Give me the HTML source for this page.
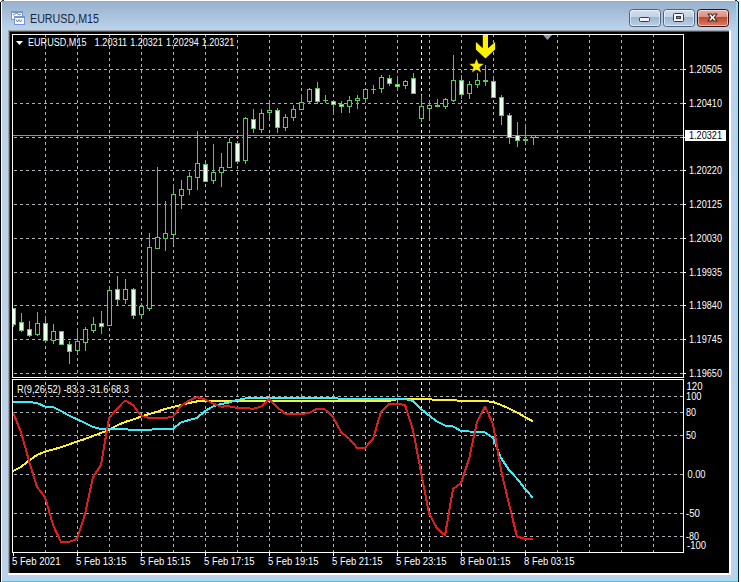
<!DOCTYPE html>
<html><head><meta charset="utf-8"><title>EURUSD,M15</title>
<style>
html,body{margin:0;padding:0;width:741px;height:582px;overflow:hidden;background:#fff;}
svg{display:block;font-family:"Liberation Sans", sans-serif;}
</style></head><body>
<svg width="741" height="582" viewBox="0 0 741 582">
<defs><linearGradient id="tg" x1="0" y1="0" x2="0" y2="1"><stop offset="0" stop-color="#97b0cc"/><stop offset="1" stop-color="#bbd2ea"/></linearGradient><linearGradient id="bg1" x1="0" y1="0" x2="0" y2="1"><stop offset="0" stop-color="#d2dfee"/><stop offset="0.45" stop-color="#c2d3e7"/><stop offset="0.46" stop-color="#9fb6d0"/><stop offset="1" stop-color="#bcd0e6"/></linearGradient><linearGradient id="bg2" x1="0" y1="0" x2="0" y2="1"><stop offset="0" stop-color="#eab0a0"/><stop offset="0.45" stop-color="#d99080"/><stop offset="0.46" stop-color="#c04828"/><stop offset="1" stop-color="#dc8070"/></linearGradient></defs>
<rect x="0" y="0" width="741" height="582" fill="#ffffff" />
<rect x="0" y="1" width="739" height="581" fill="#bcd2ea" />
<rect x="0" y="1" width="739" height="28" fill="url(#tg)" />
<rect x="0" y="1" width="739" height="1" fill="#98aec4" />
<rect x="0" y="2" width="1" height="580" fill="#000000" />
<rect x="1" y="1" width="1" height="1" fill="#303840" />
<rect x="2" y="0" width="2" height="1" fill="#303840" />
<rect x="0" y="0" width="1" height="2" fill="#ffffff" />
<rect x="735" y="0" width="2" height="1" fill="#303840" />
<rect x="737" y="1" width="1" height="2" fill="#303840" />
<rect x="739" y="0" width="2" height="582" fill="#ffffff" />
<rect x="1" y="2" width="1" height="580" fill="#ffffff" />
<rect x="736" y="2" width="2" height="580" fill="#9adcf6" />
<rect x="738" y="2" width="1" height="580" fill="#0a1520" />
<rect x="2" y="580" width="736" height="1" fill="#99e0f8" />
<rect x="2" y="581" width="736" height="1" fill="#5ab8d8" />
<rect x="8" y="30" width="723" height="1" fill="#a0a4a8" />
<rect x="8" y="30" width="1" height="545" fill="#a0a4a8" />
<rect x="9" y="31" width="721" height="1" fill="#505050" />
<rect x="9" y="31" width="1" height="543" fill="#505050" />
<rect x="729" y="30" width="2" height="545" fill="#ffffff" />
<rect x="8" y="573" width="723" height="2" fill="#ffffff" />
<rect x="10" y="32" width="719" height="541" fill="#000000" />
<g shape-rendering="crispEdges">
<rect x="11" y="11" width="12" height="9" fill="#7598cc" />
<rect x="12" y="13" width="10" height="6" fill="#f8fbff" />
<rect x="14" y="16" width="11" height="9" fill="#7598cc" />
<rect x="15" y="18" width="9" height="6" fill="#f8fbff" />
</g>
<polyline points="13,15 15,14 17,13 19,15 21,14" fill="none" stroke="#4a6aa0" stroke-width="0.8"/>
<polyline points="16,19.5 17.5,22 19,19.5 20.5,22 22,19.5" fill="none" stroke="#4a6aa0" stroke-width="0.8"/>
<text x="30" y="23" font-family="Liberation Sans" font-size="12.5" fill="#15263f" textLength="69" lengthAdjust="spacingAndGlyphs">EURUSD,M15</text>
<rect x="629.5" y="9.5" width="31" height="17" rx="3" ry="3" fill="url(#bg1)" stroke="#4f627a" stroke-width="1"/>
<rect x="630.5" y="10.5" width="29" height="15" rx="2" ry="2" fill="none" stroke="rgba(255,255,255,0.55)" stroke-width="1"/>
<rect x="663.5" y="9.5" width="31" height="17" rx="3" ry="3" fill="url(#bg1)" stroke="#4f627a" stroke-width="1"/>
<rect x="664.5" y="10.5" width="29" height="15" rx="2" ry="2" fill="none" stroke="rgba(255,255,255,0.55)" stroke-width="1"/>
<rect x="697.5" y="9.5" width="31" height="17" rx="3" ry="3" fill="url(#bg2)" stroke="#3a1010" stroke-width="1"/>
<rect x="698.5" y="10.5" width="29" height="15" rx="2" ry="2" fill="none" stroke="rgba(255,255,255,0.55)" stroke-width="1"/>
<rect x="639.5" y="17.5" width="10" height="4" rx="1" fill="#f4f4f8" stroke="#333c48" stroke-width="1"/>
<rect x="673.5" y="13.5" width="10" height="8" rx="1" fill="#f4f4f8" stroke="#333c48" stroke-width="1"/>
<rect x="676.5" y="16.5" width="4" height="2" fill="#8090a0" stroke="#333c48" stroke-width="1"/>
<path d="M708.5,13.5 L712.5,16 L716.5,13.5 M708.5,21.5 L712.5,19 L716.5,21.5" fill="none"/>
<polygon points="708,14 711.3,14 712.5,15.7 713.7,14 717,14 714.4,17.5 717,21 713.7,21 712.5,19.3 711.3,21 708,21 710.6,17.5" fill="#ffffff" stroke="#3a2424" stroke-width="1.1" stroke-linejoin="round"/>
<g shape-rendering="crispEdges">
<rect x="12" y="34" width="672" height="1" fill="#ffffff" />
<rect x="12" y="34" width="1" height="344" fill="#ffffff" />
<rect x="683" y="34" width="1" height="344" fill="#ffffff" />
<rect x="12" y="377" width="672" height="1" fill="#ffffff" />
<rect x="12" y="379" width="672" height="1" fill="#ffffff" />
<rect x="12" y="379" width="1" height="174" fill="#ffffff" />
<rect x="683" y="379" width="1" height="174" fill="#ffffff" />
<rect x="12" y="552" width="672" height="1" fill="#ffffff" />
<svg x="45" y="35" width="1" height="342" overflow="hidden"><path d="M0.5,-1V342" stroke="#aab0b6" stroke-width="1" stroke-dasharray="3 3"/></svg>
<svg x="45" y="380" width="1" height="172" overflow="hidden"><path d="M0.5,-4V172" stroke="#aab0b6" stroke-width="1" stroke-dasharray="3 3"/></svg>
<svg x="77" y="35" width="1" height="342" overflow="hidden"><path d="M0.5,-1V342" stroke="#aab0b6" stroke-width="1" stroke-dasharray="3 3"/></svg>
<svg x="77" y="380" width="1" height="172" overflow="hidden"><path d="M0.5,-4V172" stroke="#aab0b6" stroke-width="1" stroke-dasharray="3 3"/></svg>
<svg x="109" y="35" width="1" height="342" overflow="hidden"><path d="M0.5,-1V342" stroke="#aab0b6" stroke-width="1" stroke-dasharray="3 3"/></svg>
<svg x="109" y="380" width="1" height="172" overflow="hidden"><path d="M0.5,-4V172" stroke="#aab0b6" stroke-width="1" stroke-dasharray="3 3"/></svg>
<svg x="141" y="35" width="1" height="342" overflow="hidden"><path d="M0.5,-1V342" stroke="#aab0b6" stroke-width="1" stroke-dasharray="3 3"/></svg>
<svg x="141" y="380" width="1" height="172" overflow="hidden"><path d="M0.5,-4V172" stroke="#aab0b6" stroke-width="1" stroke-dasharray="3 3"/></svg>
<svg x="173" y="35" width="1" height="342" overflow="hidden"><path d="M0.5,-1V342" stroke="#aab0b6" stroke-width="1" stroke-dasharray="3 3"/></svg>
<svg x="173" y="380" width="1" height="172" overflow="hidden"><path d="M0.5,-4V172" stroke="#aab0b6" stroke-width="1" stroke-dasharray="3 3"/></svg>
<svg x="205" y="35" width="1" height="342" overflow="hidden"><path d="M0.5,-1V342" stroke="#aab0b6" stroke-width="1" stroke-dasharray="3 3"/></svg>
<svg x="205" y="380" width="1" height="172" overflow="hidden"><path d="M0.5,-4V172" stroke="#aab0b6" stroke-width="1" stroke-dasharray="3 3"/></svg>
<svg x="237" y="35" width="1" height="342" overflow="hidden"><path d="M0.5,-1V342" stroke="#aab0b6" stroke-width="1" stroke-dasharray="3 3"/></svg>
<svg x="237" y="380" width="1" height="172" overflow="hidden"><path d="M0.5,-4V172" stroke="#aab0b6" stroke-width="1" stroke-dasharray="3 3"/></svg>
<svg x="269" y="35" width="1" height="342" overflow="hidden"><path d="M0.5,-1V342" stroke="#aab0b6" stroke-width="1" stroke-dasharray="3 3"/></svg>
<svg x="269" y="380" width="1" height="172" overflow="hidden"><path d="M0.5,-4V172" stroke="#aab0b6" stroke-width="1" stroke-dasharray="3 3"/></svg>
<svg x="301" y="35" width="1" height="342" overflow="hidden"><path d="M0.5,-1V342" stroke="#aab0b6" stroke-width="1" stroke-dasharray="3 3"/></svg>
<svg x="301" y="380" width="1" height="172" overflow="hidden"><path d="M0.5,-4V172" stroke="#aab0b6" stroke-width="1" stroke-dasharray="3 3"/></svg>
<svg x="333" y="35" width="1" height="342" overflow="hidden"><path d="M0.5,-1V342" stroke="#aab0b6" stroke-width="1" stroke-dasharray="3 3"/></svg>
<svg x="333" y="380" width="1" height="172" overflow="hidden"><path d="M0.5,-4V172" stroke="#aab0b6" stroke-width="1" stroke-dasharray="3 3"/></svg>
<svg x="365" y="35" width="1" height="342" overflow="hidden"><path d="M0.5,-1V342" stroke="#aab0b6" stroke-width="1" stroke-dasharray="3 3"/></svg>
<svg x="365" y="380" width="1" height="172" overflow="hidden"><path d="M0.5,-4V172" stroke="#aab0b6" stroke-width="1" stroke-dasharray="3 3"/></svg>
<svg x="397" y="35" width="1" height="342" overflow="hidden"><path d="M0.5,-1V342" stroke="#aab0b6" stroke-width="1" stroke-dasharray="3 3"/></svg>
<svg x="397" y="380" width="1" height="172" overflow="hidden"><path d="M0.5,-4V172" stroke="#aab0b6" stroke-width="1" stroke-dasharray="3 3"/></svg>
<svg x="429" y="35" width="1" height="342" overflow="hidden"><path d="M0.5,-1V342" stroke="#aab0b6" stroke-width="1" stroke-dasharray="3 3"/></svg>
<svg x="429" y="380" width="1" height="172" overflow="hidden"><path d="M0.5,-4V172" stroke="#aab0b6" stroke-width="1" stroke-dasharray="3 3"/></svg>
<svg x="461" y="35" width="1" height="342" overflow="hidden"><path d="M0.5,-1V342" stroke="#aab0b6" stroke-width="1" stroke-dasharray="3 3"/></svg>
<svg x="461" y="380" width="1" height="172" overflow="hidden"><path d="M0.5,-4V172" stroke="#aab0b6" stroke-width="1" stroke-dasharray="3 3"/></svg>
<svg x="493" y="35" width="1" height="342" overflow="hidden"><path d="M0.5,-1V342" stroke="#aab0b6" stroke-width="1" stroke-dasharray="3 3"/></svg>
<svg x="493" y="380" width="1" height="172" overflow="hidden"><path d="M0.5,-4V172" stroke="#aab0b6" stroke-width="1" stroke-dasharray="3 3"/></svg>
<svg x="525" y="35" width="1" height="342" overflow="hidden"><path d="M0.5,-1V342" stroke="#aab0b6" stroke-width="1" stroke-dasharray="3 3"/></svg>
<svg x="525" y="380" width="1" height="172" overflow="hidden"><path d="M0.5,-4V172" stroke="#aab0b6" stroke-width="1" stroke-dasharray="3 3"/></svg>
<svg x="557" y="35" width="1" height="342" overflow="hidden"><path d="M0.5,-1V342" stroke="#aab0b6" stroke-width="1" stroke-dasharray="3 3"/></svg>
<svg x="557" y="380" width="1" height="172" overflow="hidden"><path d="M0.5,-4V172" stroke="#aab0b6" stroke-width="1" stroke-dasharray="3 3"/></svg>
<svg x="589" y="35" width="1" height="342" overflow="hidden"><path d="M0.5,-1V342" stroke="#aab0b6" stroke-width="1" stroke-dasharray="3 3"/></svg>
<svg x="589" y="380" width="1" height="172" overflow="hidden"><path d="M0.5,-4V172" stroke="#aab0b6" stroke-width="1" stroke-dasharray="3 3"/></svg>
<svg x="621" y="35" width="1" height="342" overflow="hidden"><path d="M0.5,-1V342" stroke="#aab0b6" stroke-width="1" stroke-dasharray="3 3"/></svg>
<svg x="621" y="380" width="1" height="172" overflow="hidden"><path d="M0.5,-4V172" stroke="#aab0b6" stroke-width="1" stroke-dasharray="3 3"/></svg>
<svg x="653" y="35" width="1" height="342" overflow="hidden"><path d="M0.5,-1V342" stroke="#aab0b6" stroke-width="1" stroke-dasharray="3 3"/></svg>
<svg x="653" y="380" width="1" height="172" overflow="hidden"><path d="M0.5,-4V172" stroke="#aab0b6" stroke-width="1" stroke-dasharray="3 3"/></svg>
<svg x="13" y="69" width="670" height="1" overflow="hidden"><path d="M-5,0.5H670" stroke="#aab0b6" stroke-width="1" stroke-dasharray="3 3"/></svg>
<svg x="13" y="103" width="670" height="1" overflow="hidden"><path d="M-5,0.5H670" stroke="#aab0b6" stroke-width="1" stroke-dasharray="3 3"/></svg>
<svg x="13" y="137" width="670" height="1" overflow="hidden"><path d="M-5,0.5H670" stroke="#aab0b6" stroke-width="1" stroke-dasharray="3 3"/></svg>
<svg x="13" y="170" width="670" height="1" overflow="hidden"><path d="M-5,0.5H670" stroke="#aab0b6" stroke-width="1" stroke-dasharray="3 3"/></svg>
<svg x="13" y="204" width="670" height="1" overflow="hidden"><path d="M-5,0.5H670" stroke="#aab0b6" stroke-width="1" stroke-dasharray="3 3"/></svg>
<svg x="13" y="238" width="670" height="1" overflow="hidden"><path d="M-5,0.5H670" stroke="#aab0b6" stroke-width="1" stroke-dasharray="3 3"/></svg>
<svg x="13" y="272" width="670" height="1" overflow="hidden"><path d="M-5,0.5H670" stroke="#aab0b6" stroke-width="1" stroke-dasharray="3 3"/></svg>
<svg x="13" y="305" width="670" height="1" overflow="hidden"><path d="M-5,0.5H670" stroke="#aab0b6" stroke-width="1" stroke-dasharray="3 3"/></svg>
<svg x="13" y="339" width="670" height="1" overflow="hidden"><path d="M-5,0.5H670" stroke="#aab0b6" stroke-width="1" stroke-dasharray="3 3"/></svg>
<svg x="13" y="373" width="670" height="1" overflow="hidden"><path d="M-5,0.5H670" stroke="#aab0b6" stroke-width="1" stroke-dasharray="3 3"/></svg>
<svg x="13" y="396" width="670" height="1" overflow="hidden"><path d="M-5,0.5H670" stroke="#aab0b6" stroke-width="1" stroke-dasharray="3 3"/></svg>
<svg x="13" y="412" width="670" height="1" overflow="hidden"><path d="M-5,0.5H670" stroke="#aab0b6" stroke-width="1" stroke-dasharray="3 3"/></svg>
<svg x="13" y="435" width="670" height="1" overflow="hidden"><path d="M-5,0.5H670" stroke="#aab0b6" stroke-width="1" stroke-dasharray="3 3"/></svg>
<svg x="13" y="474" width="670" height="1" overflow="hidden"><path d="M-5,0.5H670" stroke="#aab0b6" stroke-width="1" stroke-dasharray="3 3"/></svg>
<svg x="13" y="513" width="670" height="1" overflow="hidden"><path d="M-5,0.5H670" stroke="#aab0b6" stroke-width="1" stroke-dasharray="3 3"/></svg>
<svg x="13" y="536" width="670" height="1" overflow="hidden"><path d="M-5,0.5H670" stroke="#aab0b6" stroke-width="1" stroke-dasharray="3 3"/></svg>
<svg x="421" y="35" width="1" height="342" overflow="hidden"><path d="M0.5,-1V342" stroke="#ffffff" stroke-width="1" stroke-dasharray="3 3"/></svg>
<svg x="421" y="380" width="1" height="172" overflow="hidden"><path d="M0.5,-4V172" stroke="#ffffff" stroke-width="1" stroke-dasharray="3 3"/></svg>
<rect x="684" y="69" width="2" height="1" fill="#ffffff" />
<rect x="684" y="103" width="2" height="1" fill="#ffffff" />
<rect x="684" y="137" width="2" height="1" fill="#ffffff" />
<rect x="684" y="170" width="2" height="1" fill="#ffffff" />
<rect x="684" y="204" width="2" height="1" fill="#ffffff" />
<rect x="684" y="238" width="2" height="1" fill="#ffffff" />
<rect x="684" y="272" width="2" height="1" fill="#ffffff" />
<rect x="684" y="305" width="2" height="1" fill="#ffffff" />
<rect x="684" y="339" width="2" height="1" fill="#ffffff" />
<rect x="684" y="373" width="2" height="1" fill="#ffffff" />
<rect x="13" y="553" width="1" height="3" fill="#ffffff" />
<rect x="77" y="553" width="1" height="3" fill="#ffffff" />
<rect x="141" y="553" width="1" height="3" fill="#ffffff" />
<rect x="205" y="553" width="1" height="3" fill="#ffffff" />
<rect x="269" y="553" width="1" height="3" fill="#ffffff" />
<rect x="333" y="553" width="1" height="3" fill="#ffffff" />
<rect x="397" y="553" width="1" height="3" fill="#ffffff" />
<rect x="461" y="553" width="1" height="3" fill="#ffffff" />
<rect x="525" y="553" width="1" height="3" fill="#ffffff" />
<rect x="13" y="135" width="670" height="1" fill="#8796a6" />
</g>
<polygon points="543,35 552,35 547.5,40" fill="#8a9aaa"/>
<svg x="13" y="35" width="670" height="342" overflow="hidden"><g transform="translate(-13,-35)" shape-rendering="crispEdges">
<rect x="13" y="308" width="1" height="19" fill="#56cc56" />
<rect x="11" y="308" width="5" height="17" fill="#56cc56" />
<rect x="12" y="309" width="3" height="15" fill="#eaffea" />
<rect x="21" y="313" width="1" height="19" fill="#56cc56" />
<rect x="19" y="322" width="5" height="9" fill="#56cc56" />
<rect x="20" y="323" width="3" height="7" fill="#eaffea" />
<rect x="29" y="321" width="1" height="16" fill="#56cc56" />
<rect x="27" y="329" width="5" height="7" fill="#56cc56" />
<rect x="28" y="330" width="3" height="5" fill="#eaffea" />
<rect x="37" y="312" width="1" height="24" fill="#56cc56" />
<rect x="35" y="323" width="5" height="1" fill="#56cc56" />
<rect x="35" y="334" width="5" height="1" fill="#56cc56" />
<rect x="35" y="323" width="1" height="12" fill="#56cc56" />
<rect x="39" y="323" width="1" height="12" fill="#56cc56" />
<rect x="36" y="324" width="3" height="10" fill="#000000" />
<rect x="45" y="316" width="1" height="27" fill="#56cc56" />
<rect x="43" y="323" width="5" height="18" fill="#56cc56" />
<rect x="44" y="324" width="3" height="16" fill="#eaffea" />
<rect x="53" y="324" width="1" height="20" fill="#56cc56" />
<rect x="51" y="331" width="5" height="1" fill="#56cc56" />
<rect x="51" y="340" width="5" height="1" fill="#56cc56" />
<rect x="51" y="331" width="1" height="10" fill="#56cc56" />
<rect x="55" y="331" width="1" height="10" fill="#56cc56" />
<rect x="52" y="332" width="3" height="8" fill="#000000" />
<rect x="61" y="331" width="1" height="14" fill="#56cc56" />
<rect x="59" y="331" width="5" height="14" fill="#56cc56" />
<rect x="60" y="332" width="3" height="12" fill="#eaffea" />
<rect x="69" y="341" width="1" height="23" fill="#56cc56" />
<rect x="67" y="344" width="5" height="8" fill="#56cc56" />
<rect x="68" y="345" width="3" height="6" fill="#eaffea" />
<rect x="77" y="328" width="1" height="25" fill="#56cc56" />
<rect x="75" y="341" width="5" height="1" fill="#56cc56" />
<rect x="75" y="350" width="5" height="1" fill="#56cc56" />
<rect x="75" y="341" width="1" height="10" fill="#56cc56" />
<rect x="79" y="341" width="1" height="10" fill="#56cc56" />
<rect x="76" y="342" width="3" height="8" fill="#000000" />
<rect x="85" y="327" width="1" height="24" fill="#56cc56" />
<rect x="83" y="329" width="5" height="1" fill="#56cc56" />
<rect x="83" y="342" width="5" height="1" fill="#56cc56" />
<rect x="83" y="329" width="1" height="14" fill="#56cc56" />
<rect x="87" y="329" width="1" height="14" fill="#56cc56" />
<rect x="84" y="330" width="3" height="12" fill="#000000" />
<rect x="93" y="317" width="1" height="16" fill="#56cc56" />
<rect x="91" y="324" width="5" height="1" fill="#56cc56" />
<rect x="91" y="330" width="5" height="1" fill="#56cc56" />
<rect x="91" y="324" width="1" height="7" fill="#56cc56" />
<rect x="95" y="324" width="1" height="7" fill="#56cc56" />
<rect x="92" y="325" width="3" height="5" fill="#000000" />
<rect x="101" y="311" width="1" height="23" fill="#56cc56" />
<rect x="99" y="323" width="5" height="4" fill="#56cc56" />
<rect x="100" y="324" width="3" height="2" fill="#eaffea" />
<rect x="109" y="287" width="1" height="39" fill="#56cc56" />
<rect x="107" y="290" width="5" height="1" fill="#56cc56" />
<rect x="107" y="325" width="5" height="1" fill="#56cc56" />
<rect x="107" y="290" width="1" height="36" fill="#56cc56" />
<rect x="111" y="290" width="1" height="36" fill="#56cc56" />
<rect x="108" y="291" width="3" height="34" fill="#000000" />
<rect x="117" y="276" width="1" height="29" fill="#56cc56" />
<rect x="115" y="289" width="5" height="11" fill="#56cc56" />
<rect x="116" y="290" width="3" height="9" fill="#eaffea" />
<rect x="125" y="279" width="1" height="25" fill="#56cc56" />
<rect x="123" y="289" width="5" height="1" fill="#56cc56" />
<rect x="123" y="299" width="5" height="1" fill="#56cc56" />
<rect x="123" y="289" width="1" height="11" fill="#56cc56" />
<rect x="127" y="289" width="1" height="11" fill="#56cc56" />
<rect x="124" y="290" width="3" height="9" fill="#000000" />
<rect x="133" y="288" width="1" height="31" fill="#56cc56" />
<rect x="131" y="289" width="5" height="27" fill="#56cc56" />
<rect x="132" y="290" width="3" height="25" fill="#eaffea" />
<rect x="141" y="303" width="1" height="16" fill="#56cc56" />
<rect x="139" y="306" width="5" height="1" fill="#56cc56" />
<rect x="139" y="314" width="5" height="1" fill="#56cc56" />
<rect x="139" y="306" width="1" height="9" fill="#56cc56" />
<rect x="143" y="306" width="1" height="9" fill="#56cc56" />
<rect x="140" y="307" width="3" height="7" fill="#000000" />
<rect x="149" y="233" width="1" height="78" fill="#56cc56" />
<rect x="147" y="247" width="5" height="1" fill="#56cc56" />
<rect x="147" y="308" width="5" height="1" fill="#56cc56" />
<rect x="147" y="247" width="1" height="62" fill="#56cc56" />
<rect x="151" y="247" width="1" height="62" fill="#56cc56" />
<rect x="148" y="248" width="3" height="60" fill="#000000" />
<rect x="157" y="167" width="1" height="82" fill="#56cc56" />
<rect x="155" y="237" width="5" height="1" fill="#56cc56" />
<rect x="155" y="248" width="5" height="1" fill="#56cc56" />
<rect x="155" y="237" width="1" height="12" fill="#56cc56" />
<rect x="159" y="237" width="1" height="12" fill="#56cc56" />
<rect x="156" y="238" width="3" height="10" fill="#000000" />
<rect x="165" y="201" width="1" height="50" fill="#56cc56" />
<rect x="163" y="233" width="5" height="1" fill="#56cc56" />
<rect x="163" y="238" width="5" height="1" fill="#56cc56" />
<rect x="163" y="233" width="1" height="6" fill="#56cc56" />
<rect x="167" y="233" width="1" height="6" fill="#56cc56" />
<rect x="164" y="234" width="3" height="4" fill="#000000" />
<rect x="173" y="184" width="1" height="61" fill="#56cc56" />
<rect x="171" y="194" width="5" height="1" fill="#56cc56" />
<rect x="171" y="234" width="5" height="1" fill="#56cc56" />
<rect x="171" y="194" width="1" height="41" fill="#56cc56" />
<rect x="175" y="194" width="1" height="41" fill="#56cc56" />
<rect x="172" y="195" width="3" height="39" fill="#000000" />
<rect x="181" y="180" width="1" height="29" fill="#56cc56" />
<rect x="179" y="189" width="5" height="1" fill="#56cc56" />
<rect x="179" y="195" width="5" height="1" fill="#56cc56" />
<rect x="179" y="189" width="1" height="7" fill="#56cc56" />
<rect x="183" y="189" width="1" height="7" fill="#56cc56" />
<rect x="180" y="190" width="3" height="5" fill="#000000" />
<rect x="189" y="172" width="1" height="23" fill="#56cc56" />
<rect x="187" y="176" width="5" height="1" fill="#56cc56" />
<rect x="187" y="189" width="5" height="1" fill="#56cc56" />
<rect x="187" y="176" width="1" height="14" fill="#56cc56" />
<rect x="191" y="176" width="1" height="14" fill="#56cc56" />
<rect x="188" y="177" width="3" height="12" fill="#000000" />
<rect x="197" y="131" width="1" height="59" fill="#56cc56" />
<rect x="195" y="163" width="5" height="1" fill="#56cc56" />
<rect x="195" y="177" width="5" height="1" fill="#56cc56" />
<rect x="195" y="163" width="1" height="15" fill="#56cc56" />
<rect x="199" y="163" width="1" height="15" fill="#56cc56" />
<rect x="196" y="164" width="3" height="13" fill="#000000" />
<rect x="205" y="160" width="1" height="22" fill="#56cc56" />
<rect x="203" y="164" width="5" height="18" fill="#56cc56" />
<rect x="204" y="165" width="3" height="16" fill="#eaffea" />
<rect x="213" y="144" width="1" height="40" fill="#56cc56" />
<rect x="211" y="172" width="5" height="1" fill="#56cc56" />
<rect x="211" y="180" width="5" height="1" fill="#56cc56" />
<rect x="211" y="172" width="1" height="9" fill="#56cc56" />
<rect x="215" y="172" width="1" height="9" fill="#56cc56" />
<rect x="212" y="173" width="3" height="7" fill="#000000" />
<rect x="221" y="153" width="1" height="34" fill="#56cc56" />
<rect x="219" y="167" width="5" height="1" fill="#56cc56" />
<rect x="219" y="172" width="5" height="1" fill="#56cc56" />
<rect x="219" y="167" width="1" height="6" fill="#56cc56" />
<rect x="223" y="167" width="1" height="6" fill="#56cc56" />
<rect x="220" y="168" width="3" height="4" fill="#000000" />
<rect x="229" y="138" width="1" height="30" fill="#56cc56" />
<rect x="227" y="142" width="5" height="1" fill="#56cc56" />
<rect x="227" y="167" width="5" height="1" fill="#56cc56" />
<rect x="227" y="142" width="1" height="26" fill="#56cc56" />
<rect x="231" y="142" width="1" height="26" fill="#56cc56" />
<rect x="228" y="143" width="3" height="24" fill="#000000" />
<rect x="237" y="141" width="1" height="23" fill="#56cc56" />
<rect x="235" y="143" width="5" height="19" fill="#56cc56" />
<rect x="236" y="144" width="3" height="17" fill="#eaffea" />
<rect x="245" y="117" width="1" height="47" fill="#56cc56" />
<rect x="243" y="118" width="5" height="1" fill="#56cc56" />
<rect x="243" y="160" width="5" height="1" fill="#56cc56" />
<rect x="243" y="118" width="1" height="43" fill="#56cc56" />
<rect x="247" y="118" width="1" height="43" fill="#56cc56" />
<rect x="244" y="119" width="3" height="41" fill="#000000" />
<rect x="253" y="109" width="1" height="24" fill="#56cc56" />
<rect x="251" y="119" width="5" height="10" fill="#56cc56" />
<rect x="252" y="120" width="3" height="8" fill="#eaffea" />
<rect x="261" y="109" width="1" height="24" fill="#56cc56" />
<rect x="259" y="113" width="5" height="1" fill="#56cc56" />
<rect x="259" y="129" width="5" height="1" fill="#56cc56" />
<rect x="259" y="113" width="1" height="17" fill="#56cc56" />
<rect x="263" y="113" width="1" height="17" fill="#56cc56" />
<rect x="260" y="114" width="3" height="15" fill="#000000" />
<rect x="269" y="100" width="1" height="21" fill="#56cc56" />
<rect x="267" y="110" width="5" height="1" fill="#56cc56" />
<rect x="267" y="112" width="5" height="1" fill="#56cc56" />
<rect x="267" y="110" width="1" height="3" fill="#56cc56" />
<rect x="271" y="110" width="1" height="3" fill="#56cc56" />
<rect x="268" y="111" width="3" height="1" fill="#000000" />
<rect x="277" y="108" width="1" height="25" fill="#56cc56" />
<rect x="275" y="110" width="5" height="18" fill="#56cc56" />
<rect x="276" y="111" width="3" height="16" fill="#eaffea" />
<rect x="285" y="114" width="1" height="17" fill="#56cc56" />
<rect x="283" y="117" width="5" height="1" fill="#56cc56" />
<rect x="283" y="127" width="5" height="1" fill="#56cc56" />
<rect x="283" y="117" width="1" height="11" fill="#56cc56" />
<rect x="287" y="117" width="1" height="11" fill="#56cc56" />
<rect x="284" y="118" width="3" height="9" fill="#000000" />
<rect x="293" y="105" width="1" height="16" fill="#56cc56" />
<rect x="291" y="109" width="5" height="1" fill="#56cc56" />
<rect x="291" y="117" width="5" height="1" fill="#56cc56" />
<rect x="291" y="109" width="1" height="9" fill="#56cc56" />
<rect x="295" y="109" width="1" height="9" fill="#56cc56" />
<rect x="292" y="110" width="3" height="7" fill="#000000" />
<rect x="301" y="94" width="1" height="16" fill="#56cc56" />
<rect x="299" y="102" width="5" height="1" fill="#56cc56" />
<rect x="299" y="109" width="5" height="1" fill="#56cc56" />
<rect x="299" y="102" width="1" height="8" fill="#56cc56" />
<rect x="303" y="102" width="1" height="8" fill="#56cc56" />
<rect x="300" y="103" width="3" height="6" fill="#000000" />
<rect x="309" y="88" width="1" height="16" fill="#56cc56" />
<rect x="307" y="89" width="5" height="1" fill="#56cc56" />
<rect x="307" y="101" width="5" height="1" fill="#56cc56" />
<rect x="307" y="89" width="1" height="13" fill="#56cc56" />
<rect x="311" y="89" width="1" height="13" fill="#56cc56" />
<rect x="308" y="90" width="3" height="11" fill="#000000" />
<rect x="317" y="82" width="1" height="22" fill="#56cc56" />
<rect x="315" y="88" width="5" height="14" fill="#56cc56" />
<rect x="316" y="89" width="3" height="12" fill="#eaffea" />
<rect x="325" y="95" width="1" height="8" fill="#56cc56" />
<rect x="323" y="100" width="5" height="1" fill="#56cc56" />
<rect x="333" y="100" width="1" height="15" fill="#56cc56" />
<rect x="331" y="101" width="5" height="4" fill="#56cc56" />
<rect x="332" y="102" width="3" height="2" fill="#eaffea" />
<rect x="341" y="101" width="1" height="12" fill="#56cc56" />
<rect x="339" y="104" width="5" height="3" fill="#56cc56" />
<rect x="340" y="105" width="3" height="1" fill="#eaffea" />
<rect x="349" y="96" width="1" height="17" fill="#56cc56" />
<rect x="347" y="100" width="5" height="1" fill="#56cc56" />
<rect x="347" y="106" width="5" height="1" fill="#56cc56" />
<rect x="347" y="100" width="1" height="7" fill="#56cc56" />
<rect x="351" y="100" width="1" height="7" fill="#56cc56" />
<rect x="348" y="101" width="3" height="5" fill="#000000" />
<rect x="357" y="95" width="1" height="14" fill="#56cc56" />
<rect x="355" y="98" width="5" height="1" fill="#56cc56" />
<rect x="355" y="100" width="5" height="1" fill="#56cc56" />
<rect x="355" y="98" width="1" height="3" fill="#56cc56" />
<rect x="359" y="98" width="1" height="3" fill="#56cc56" />
<rect x="356" y="99" width="3" height="1" fill="#000000" />
<rect x="365" y="88" width="1" height="15" fill="#56cc56" />
<rect x="363" y="89" width="5" height="1" fill="#56cc56" />
<rect x="363" y="98" width="5" height="1" fill="#56cc56" />
<rect x="363" y="89" width="1" height="10" fill="#56cc56" />
<rect x="367" y="89" width="1" height="10" fill="#56cc56" />
<rect x="364" y="90" width="3" height="8" fill="#000000" />
<rect x="373" y="85" width="1" height="9" fill="#56cc56" />
<rect x="371" y="89" width="5" height="1" fill="#56cc56" />
<rect x="381" y="75" width="1" height="18" fill="#56cc56" />
<rect x="379" y="77" width="5" height="1" fill="#56cc56" />
<rect x="379" y="88" width="5" height="1" fill="#56cc56" />
<rect x="379" y="77" width="1" height="12" fill="#56cc56" />
<rect x="383" y="77" width="1" height="12" fill="#56cc56" />
<rect x="380" y="78" width="3" height="10" fill="#000000" />
<rect x="389" y="75" width="1" height="11" fill="#56cc56" />
<rect x="387" y="78" width="5" height="6" fill="#56cc56" />
<rect x="388" y="79" width="3" height="4" fill="#eaffea" />
<rect x="397" y="76" width="1" height="15" fill="#56cc56" />
<rect x="395" y="84" width="5" height="3" fill="#56cc56" />
<rect x="396" y="85" width="3" height="1" fill="#eaffea" />
<rect x="405" y="80" width="1" height="9" fill="#56cc56" />
<rect x="403" y="81" width="5" height="1" fill="#56cc56" />
<rect x="403" y="85" width="5" height="1" fill="#56cc56" />
<rect x="403" y="81" width="1" height="5" fill="#56cc56" />
<rect x="407" y="81" width="1" height="5" fill="#56cc56" />
<rect x="404" y="82" width="3" height="3" fill="#000000" />
<rect x="413" y="73" width="1" height="21" fill="#56cc56" />
<rect x="411" y="78" width="5" height="16" fill="#56cc56" />
<rect x="412" y="79" width="3" height="14" fill="#eaffea" />
<rect x="421" y="95" width="1" height="27" fill="#56cc56" />
<rect x="419" y="106" width="5" height="1" fill="#56cc56" />
<rect x="419" y="118" width="5" height="1" fill="#56cc56" />
<rect x="419" y="106" width="1" height="13" fill="#56cc56" />
<rect x="423" y="106" width="1" height="13" fill="#56cc56" />
<rect x="420" y="107" width="3" height="11" fill="#000000" />
<rect x="429" y="100" width="1" height="21" fill="#56cc56" />
<rect x="427" y="105" width="5" height="1" fill="#56cc56" />
<rect x="427" y="108" width="5" height="1" fill="#56cc56" />
<rect x="427" y="105" width="1" height="4" fill="#56cc56" />
<rect x="431" y="105" width="1" height="4" fill="#56cc56" />
<rect x="428" y="106" width="3" height="2" fill="#000000" />
<rect x="437" y="99" width="1" height="8" fill="#56cc56" />
<rect x="435" y="105" width="5" height="2" fill="#56cc56" />
<rect x="445" y="98" width="1" height="11" fill="#56cc56" />
<rect x="443" y="99" width="5" height="1" fill="#56cc56" />
<rect x="443" y="106" width="5" height="1" fill="#56cc56" />
<rect x="443" y="99" width="1" height="8" fill="#56cc56" />
<rect x="447" y="99" width="1" height="8" fill="#56cc56" />
<rect x="444" y="100" width="3" height="6" fill="#000000" />
<rect x="453" y="55" width="1" height="47" fill="#56cc56" />
<rect x="451" y="80" width="5" height="1" fill="#56cc56" />
<rect x="451" y="100" width="5" height="1" fill="#56cc56" />
<rect x="451" y="80" width="1" height="21" fill="#56cc56" />
<rect x="455" y="80" width="1" height="21" fill="#56cc56" />
<rect x="452" y="81" width="3" height="19" fill="#000000" />
<rect x="461" y="75" width="1" height="24" fill="#56cc56" />
<rect x="459" y="80" width="5" height="15" fill="#56cc56" />
<rect x="460" y="81" width="3" height="13" fill="#eaffea" />
<rect x="469" y="81" width="1" height="18" fill="#56cc56" />
<rect x="467" y="84" width="5" height="1" fill="#56cc56" />
<rect x="467" y="93" width="5" height="1" fill="#56cc56" />
<rect x="467" y="84" width="1" height="10" fill="#56cc56" />
<rect x="471" y="84" width="1" height="10" fill="#56cc56" />
<rect x="468" y="85" width="3" height="8" fill="#000000" />
<rect x="477" y="73" width="1" height="15" fill="#56cc56" />
<rect x="475" y="80" width="5" height="1" fill="#56cc56" />
<rect x="475" y="84" width="5" height="1" fill="#56cc56" />
<rect x="475" y="80" width="1" height="5" fill="#56cc56" />
<rect x="479" y="80" width="1" height="5" fill="#56cc56" />
<rect x="476" y="81" width="3" height="3" fill="#000000" />
<rect x="485" y="65" width="1" height="21" fill="#56cc56" />
<rect x="483" y="80" width="5" height="2" fill="#56cc56" />
<rect x="493" y="76" width="1" height="22" fill="#56cc56" />
<rect x="491" y="81" width="5" height="17" fill="#56cc56" />
<rect x="492" y="82" width="3" height="15" fill="#eaffea" />
<rect x="501" y="95" width="1" height="30" fill="#56cc56" />
<rect x="499" y="97" width="5" height="19" fill="#56cc56" />
<rect x="500" y="98" width="3" height="17" fill="#eaffea" />
<rect x="509" y="113" width="1" height="31" fill="#56cc56" />
<rect x="507" y="115" width="5" height="23" fill="#56cc56" />
<rect x="508" y="116" width="3" height="21" fill="#eaffea" />
<rect x="517" y="122" width="1" height="25" fill="#56cc56" />
<rect x="515" y="135" width="5" height="6" fill="#56cc56" />
<rect x="516" y="136" width="3" height="4" fill="#eaffea" />
<rect x="525" y="124" width="1" height="20" fill="#56cc56" />
<rect x="523" y="139" width="5" height="2" fill="#56cc56" />
<rect x="533" y="135" width="1" height="10" fill="#56cc56" />
<rect x="531" y="135" width="5" height="1" fill="#56cc56" />
<rect x="531" y="137" width="5" height="1" fill="#56cc56" />
<rect x="531" y="135" width="1" height="3" fill="#56cc56" />
<rect x="535" y="135" width="1" height="3" fill="#56cc56" />
<rect x="532" y="136" width="3" height="1" fill="#000000" />
</g></svg>
<polygon points="482.8,35 488,35 488,48.2 495.1,41.9 495.1,49.4 485.4,58.5 475.9,49.4 475.9,41.9 482.8,48.2" fill="#fff200"/>
<polygon points="476.50,59.10 478.26,63.87 483.35,64.08 479.35,67.23 480.73,72.12 476.50,69.30 472.27,72.12 473.65,67.23 469.65,64.08 474.74,63.87" fill="#fff200" stroke="#e0c000" stroke-width="0.4"/>
<svg x="13" y="380" width="670" height="172" overflow="hidden"><g transform="translate(-13,-380)">
<polyline points="13,471 21,467 29,460.5 37,455 45,451.7 53,449.5 61,447.2 69,444.5 77,441.5 85,439 93,436 101,433 109,430 117,425.5 125,422 133,419.5 141,416.6 149,414 157,411.8 165,409 173,407 181,405 189,403 197,401.4 205,401 213,401 221,401 229,401 237,401 245,401 253,401 261,401 269,401 277,401 285,401 293,401 301,401 309,401 317,401 325,401 333,401 341,401 349,401 357,401 365,401 373,401 381,401 389,401 397,399.2 405,399.2 413,399.2 421,399.2 429,399.2 437,400 445,400 453,400 461,401 469,401 477,401 485,401 493,402 501,405 509,408.5 517,412.5 525,417 533,421.4" fill="none" stroke="#fff028" stroke-width="2" stroke-linejoin="round" shape-rendering="crispEdges"/>
<polyline points="13,402 21,402 29,402 37,403 45,406.6 53,407 61,411 69,415.5 77,419.3 85,423 93,427 101,429 109,429 117,429 125,429 133,430.2 141,430.2 149,430 157,428.7 165,428.7 173,428.7 181,422.5 189,420 197,418 205,411 213,406.5 221,404 229,402.5 237,400 245,398.5 253,397.7 261,397.7 269,397.7 277,397.7 285,397.7 293,397.7 301,397.7 309,397.7 317,397.7 325,397.7 333,397.7 341,398.9 349,398.9 357,398.9 365,398.9 373,398.9 381,398.9 389,398.9 397,398.9 405,398.9 413,401 421,408.8 429,415.5 437,421.4 445,425.5 453,426.5 461,431 469,431.5 477,431.7 485,432.4 493,438 501,458 509,470 517,478.6 525,488.9 533,497.8" fill="none" stroke="#3cecf6" stroke-width="2" stroke-linejoin="round" shape-rendering="crispEdges"/>
<polyline points="13,412.5 21,432 29,461 37,487 45,497 53,525 61,542 69,542 77,539 85,514 93,477 101,465 109,418 117,408.8 125,400.4 133,405 141,415.5 149,418 157,418 165,418 173,416.6 181,405.8 189,400.7 197,397 205,399.5 213,403.5 221,406.6 229,406.3 237,408 245,408 253,408.8 261,406.6 269,399.2 277,407 285,413.5 293,414.3 301,414 309,413 317,408.8 325,409.5 333,416.9 341,432 349,438.5 357,447.7 365,447.7 373,439 381,411.8 389,403.6 397,403.6 405,405 413,430 421,472 429,513.3 437,528.5 445,535.4 453,488.9 461,483 469,459 477,422 485,406.6 493,424 501,470 509,504 517,536.6 525,538.7 533,538.7" fill="none" stroke="#dc1e1e" stroke-width="2" stroke-linejoin="round" shape-rendering="crispEdges"/>
</g></svg>
<polygon points="16,41 23,41 19.5,45" fill="#ffffff"/>
<text x="28" y="46" font-family="Liberation Sans" font-size="10" fill="#ffffff" textLength="58.5" lengthAdjust="spacingAndGlyphs">EURUSD,M15</text>
<text x="94.6" y="46" font-family="Liberation Sans" font-size="10" fill="#ffffff" textLength="32.6" lengthAdjust="spacingAndGlyphs">1.20311</text>
<text x="130.3" y="46" font-family="Liberation Sans" font-size="10" fill="#ffffff" textLength="32.6" lengthAdjust="spacingAndGlyphs">1.20321</text>
<text x="166.1" y="46" font-family="Liberation Sans" font-size="10" fill="#ffffff" textLength="32.6" lengthAdjust="spacingAndGlyphs">1.20294</text>
<text x="201.8" y="46" font-family="Liberation Sans" font-size="10" fill="#ffffff" textLength="32.6" lengthAdjust="spacingAndGlyphs">1.20321</text>
<text x="17" y="393" font-family="Liberation Sans" font-size="10" fill="#ffffff" textLength="112" lengthAdjust="spacingAndGlyphs">R(9,26,52) -83.3 -31.6 68.3</text>
<text x="689" y="73" font-family="Liberation Sans" font-size="10" fill="#ffffff" textLength="33" lengthAdjust="spacingAndGlyphs">1.20505</text>
<text x="689" y="107" font-family="Liberation Sans" font-size="10" fill="#ffffff" textLength="33" lengthAdjust="spacingAndGlyphs">1.20410</text>
<text x="689" y="174" font-family="Liberation Sans" font-size="10" fill="#ffffff" textLength="33" lengthAdjust="spacingAndGlyphs">1.20220</text>
<text x="689" y="208" font-family="Liberation Sans" font-size="10" fill="#ffffff" textLength="33" lengthAdjust="spacingAndGlyphs">1.20125</text>
<text x="689" y="242" font-family="Liberation Sans" font-size="10" fill="#ffffff" textLength="33" lengthAdjust="spacingAndGlyphs">1.20030</text>
<text x="689" y="276" font-family="Liberation Sans" font-size="10" fill="#ffffff" textLength="33" lengthAdjust="spacingAndGlyphs">1.19935</text>
<text x="689" y="309" font-family="Liberation Sans" font-size="10" fill="#ffffff" textLength="33" lengthAdjust="spacingAndGlyphs">1.19840</text>
<text x="689" y="343" font-family="Liberation Sans" font-size="10" fill="#ffffff" textLength="33" lengthAdjust="spacingAndGlyphs">1.19745</text>
<text x="689" y="377" font-family="Liberation Sans" font-size="10" fill="#ffffff" textLength="33" lengthAdjust="spacingAndGlyphs">1.19650</text>
<rect x="685" y="130" width="41" height="11" fill="#ffffff" />
<text x="689" y="139" font-family="Liberation Sans" font-size="10" fill="#000000" textLength="33" lengthAdjust="spacingAndGlyphs">1.20321</text>
<text x="686.5" y="390" font-family="Liberation Sans" font-size="10" fill="#ffffff" textLength="16" lengthAdjust="spacingAndGlyphs">120</text>
<text x="686" y="400" font-family="Liberation Sans" font-size="10" fill="#ffffff" textLength="15.5" lengthAdjust="spacingAndGlyphs">100</text>
<text x="686" y="416" font-family="Liberation Sans" font-size="10" fill="#ffffff" textLength="10" lengthAdjust="spacingAndGlyphs">80</text>
<text x="686" y="439" font-family="Liberation Sans" font-size="10" fill="#ffffff" textLength="10" lengthAdjust="spacingAndGlyphs">50</text>
<text x="687.5" y="478" font-family="Liberation Sans" font-size="10" fill="#ffffff" textLength="18" lengthAdjust="spacingAndGlyphs">0.00</text>
<text x="686" y="517" font-family="Liberation Sans" font-size="10" fill="#ffffff" textLength="14" lengthAdjust="spacingAndGlyphs">-50</text>
<text x="686" y="540" font-family="Liberation Sans" font-size="10" fill="#ffffff" textLength="13" lengthAdjust="spacingAndGlyphs">-80</text>
<text x="687" y="549" font-family="Liberation Sans" font-size="10" fill="#ffffff" textLength="19" lengthAdjust="spacingAndGlyphs">-100</text>
<text x="12" y="565" font-family="Liberation Sans" font-size="10" fill="#ffffff" textLength="48.5" lengthAdjust="spacingAndGlyphs">5 Feb 2021</text>
<text x="76" y="565" font-family="Liberation Sans" font-size="10" fill="#ffffff" textLength="50.5" lengthAdjust="spacingAndGlyphs">5 Feb 13:15</text>
<text x="140" y="565" font-family="Liberation Sans" font-size="10" fill="#ffffff" textLength="50.5" lengthAdjust="spacingAndGlyphs">5 Feb 15:15</text>
<text x="204" y="565" font-family="Liberation Sans" font-size="10" fill="#ffffff" textLength="50.5" lengthAdjust="spacingAndGlyphs">5 Feb 17:15</text>
<text x="268" y="565" font-family="Liberation Sans" font-size="10" fill="#ffffff" textLength="50.5" lengthAdjust="spacingAndGlyphs">5 Feb 19:15</text>
<text x="332" y="565" font-family="Liberation Sans" font-size="10" fill="#ffffff" textLength="50.5" lengthAdjust="spacingAndGlyphs">5 Feb 21:15</text>
<text x="396" y="565" font-family="Liberation Sans" font-size="10" fill="#ffffff" textLength="50.5" lengthAdjust="spacingAndGlyphs">5 Feb 23:15</text>
<text x="460" y="565" font-family="Liberation Sans" font-size="10" fill="#ffffff" textLength="50.5" lengthAdjust="spacingAndGlyphs">8 Feb 01:15</text>
<text x="524" y="565" font-family="Liberation Sans" font-size="10" fill="#ffffff" textLength="50.5" lengthAdjust="spacingAndGlyphs">8 Feb 03:15</text>
</svg>
</body></html>
